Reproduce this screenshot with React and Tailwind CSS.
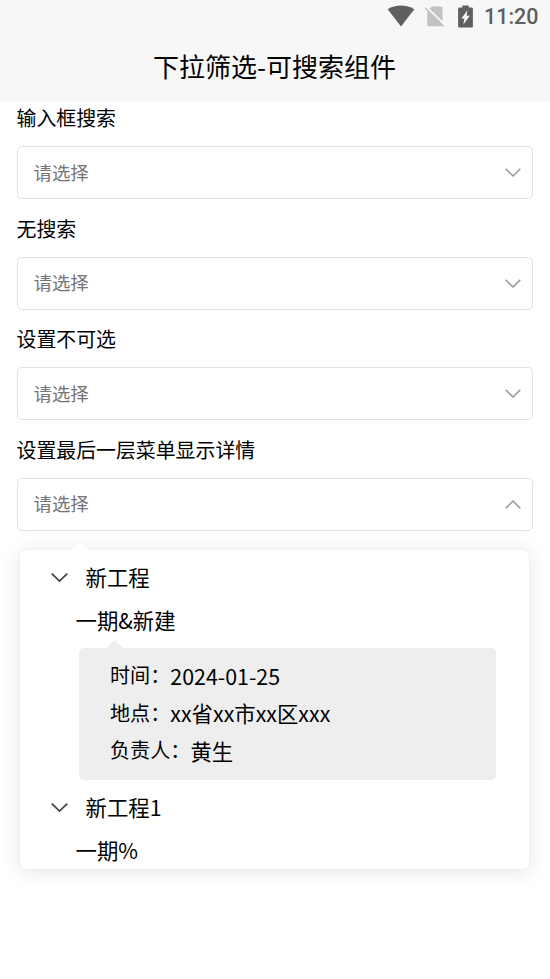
import React, { useState } from 'react';

const FIELDS = [
  { id: 'search', label: '输入框搜索' },
  { id: 'plain', label: '无搜索' },
  { id: 'disabled', label: '设置不可选' },
  { id: 'detail', label: '设置最后一层菜单显示详情' },
];

const TREE = [
  {
    name: '新工程',
    children: [
      {
        name: '一期&新建',
        details: [
          { label: '时间：', value: '2024-01-25' },
          { label: '地点：', value: 'xx省xx市xx区xxx' },
          { label: '负责人：', value: '黄生' },
        ],
      },
    ],
  },
  { name: '新工程1', children: [{ name: '一期%' }] },
];

const StatusBar = () => (
  <div className="flex h-8 items-center justify-end pr-[11.5px] text-[#5f5f5f]">
    <svg className="mr-[9px] h-[22px] w-[28px]" viewBox="0 0 28 22" fill="currentColor">
      <path d="M0.7 4.2C8.5 -0.7 19.5 -0.7 27.3 4.2L14 21.6Z" />
    </svg>
    <svg className="mr-[13px] h-[22px] w-[21px]" viewBox="0 0 21 22" fill="#c2c2c2">
      <path d="M8.5 1.5H17Q18.5 1.5 18.5 3V16.2L5.3 3.5Z" />
      <path d="M1.6 2.2L20.3 20.8L19.3 21.8L18.4 21.2H5Q3.2 21.2 3.2 19.4V5.8L0.6 3.2Z" />
    </svg>
    <svg className="mr-[11px] h-[23px] w-[15px]" viewBox="0 0 15 23" fill="currentColor">
      <path
        fillRule="evenodd"
        d="M4.3 0.5H10.7V2.6H13.6Q14.9 2.6 14.9 3.9V21.3Q14.9 22.6 13.6 22.6H1.4Q0.1 22.6 0.1 21.3V3.9Q0.1 2.6 1.4 2.6H4.3ZM9.4 5.2L3.4 13.6H6.4L5.4 19.4L11.8 10.8H8.6Z"
      />
    </svg>
    <span className="mt-[2px] font-[Roboto] text-[21.5px] font-medium leading-none">11:20</span>
  </div>
);

const Arrow = ({ up, className }) => (
  <svg
    className={`h-[9px] ${up ? 'rotate-180' : ''} ${className}`}
    viewBox="0 0 16 9"
    fill="none"
    stroke="currentColor"
    preserveAspectRatio="none"
  >
    <path d="M0.7 0.7L8 8L15.3 0.7" />
  </svg>
);

const SelectField = ({ label, open, onToggle }) => (
  <div className="mb-[13.6px]">
    <div className="mb-3 h-8 text-[19.9px] leading-8">{label}</div>
    <button
      type="button"
      onClick={onToggle}
      className="flex h-[53px] w-full items-center justify-between rounded-[5px] border-[1.5px] border-[#e2e2e2] bg-white pl-[16px] pr-[11px] text-[18.4px] text-[#757575]"
    >
      <span>请选择</span>
      <Arrow up={open} className="w-[16px] stroke-[1.4] text-[#929292]" />
    </button>
  </div>
);

const DetailCard = ({ details }) => (
  <div className="relative ml-[59px] mr-[33px] mt-[7px] h-[132px] rounded-[5px] bg-[#eee] pl-[31px] pt-[8px]">
    {/* small arrow pointing at the menu item */}
    <div className="absolute -top-[8px] left-[26px] h-[9px] w-[19px] bg-[#eee] [clip-path:polygon(50%_0,100%_100%,0_100%)]" />
    {details.map((d) => (
      <div key={d.label} className="flex h-[37.7px] items-center">
        <span className="text-[20.1px] leading-none">{d.label}</span>
        <span className="mt-px text-[21.4px] leading-none">{d.value}</span>
      </div>
    ))}
  </div>
);

const TreeNode = ({ node }) => (
  <div className="mb-[5.5px]">
    <div className="flex h-[43px] items-center pl-[30.5px]">
      <Arrow className="mr-[18px] mt-px w-[17px] stroke-[1.7] text-[#444]" />
      <span>{node.name}</span>
    </div>
    {node.children.map((child) => (
      <div key={child.name}>
        <div className="flex h-[43px] items-center pl-[55.5px]">{child.name}</div>
        {child.details && <DetailCard details={child.details} />}
      </div>
    ))}
  </div>
);

const App = () => {
  const [openId, setOpenId] = useState('detail');

  return (
    <div className="h-[979px] overflow-hidden bg-white font-['Noto_Sans_CJK_SC',sans-serif] text-black">
      <header className="h-[102px] bg-[#f7f7f7]">
        <StatusBar />
        <h1 className="pr-[1px] text-center text-[26px] font-normal leading-[67px]">下拉筛选-可搜索组件</h1>
      </header>

      <main className="flex flex-col pl-[16.5px] pr-[17.5px]">
        {FIELDS.map((f) => (
          <SelectField
            key={f.id}
            label={f.label}
            open={openId === f.id}
            onToggle={() => setOpenId(openId === f.id ? null : f.id)}
          />
        ))}
      </main>

      {openId && (
        <div className="relative ml-[19px] mr-[20px] mt-[4.2px] h-[321px] rounded-[7px] border border-[#f0f0f0] bg-white shadow-[0_2px_20px_rgba(0,0,0,0.1)]">
          <div className="absolute -top-[8px] left-[51px] h-[9px] w-[18px] bg-white [clip-path:polygon(50%_0,100%_100%,0_100%)]" />
          <div className="h-full overflow-hidden rounded-[6px] pt-[5.5px] text-[21.4px]">
            {TREE.map((node) => (
              <TreeNode key={node.name} node={node} />
            ))}
          </div>
        </div>
      )}
    </div>
  );
};

export default App;
